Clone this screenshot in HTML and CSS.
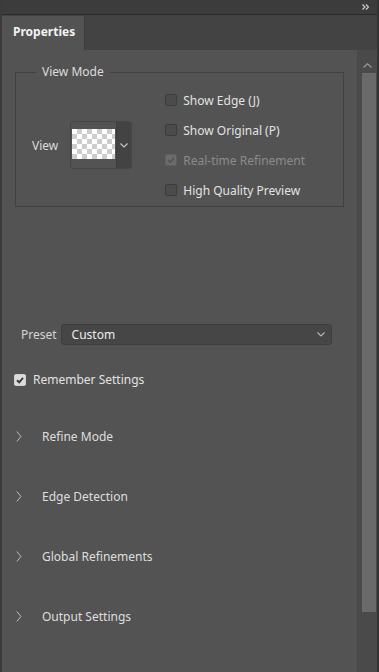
FILE: index.html
```html
<!DOCTYPE html>
<html lang="en">
<head>
    <meta charset="UTF-8">
    <title>Properties</title>
    <link rel="stylesheet" href="styles.css">
</head>
<body>
    <div class="panel">
        <div class="topbar">
            <svg class="collapse" width="7" height="6" viewBox="0 0 7 6">
                <path d="M0.5 0.5 L3 3 L0.5 5.5 M4 0.5 L6.5 3 L4 5.5" fill="none" stroke="#cfcfcf" stroke-width="1.2"/>
            </svg>
        </div>
        <div class="tabs">
            <div class="tab">Properties</div>
        </div>
        <div class="main">
            <div class="content">
                <fieldset class="view-mode">
                    <legend>View Mode</legend>
                    <div class="view-pick">
                        <span class="view-label">View</span>
                        <div class="thumb">
                            <div class="thumb-preview"><div class="checker"></div></div>
                            <div class="thumb-drop">
                                <svg width="8" height="5" viewBox="0 0 8 5"><path d="M0.5 0.5 L4 4 L7.5 0.5" fill="none" stroke="#c8c8c8" stroke-width="1.1"/></svg>
                            </div>
                        </div>
                    </div>
                    <div class="options">
                        <label class="opt"><span class="box"></span>Show Edge (J)</label>
                        <label class="opt"><span class="box"></span>Show Original (P)</label>
                        <label class="opt disabled"><span class="box checked">
                            <svg width="10" height="10" viewBox="0 0 10 10"><path d="M2 5.2 L4.2 7.3 L8 2.8" fill="none" stroke="#545454" stroke-width="1.8"/></svg>
                        </span>Real-time Refinement</label>
                        <label class="opt"><span class="box"></span>High Quality Preview</label>
                    </div>
                </fieldset>

                <div class="preset">
                    <span class="preset-label">Preset</span>
                    <div class="select">
                        <span>Custom</span>
                        <svg width="8" height="5" viewBox="0 0 8 5"><path d="M0.5 0.5 L4 4 L7.5 0.5" fill="none" stroke="#b8b8b8" stroke-width="1.1"/></svg>
                    </div>
                </div>

                <label class="remember"><span class="box on">
                    <svg width="10" height="10" viewBox="0 0 10 10"><path d="M2 5.2 L4.2 7.3 L8 2.8" fill="none" stroke="#3a3a3a" stroke-width="1.9"/></svg>
                </span>Remember Settings</label>

                <div class="sections">
                    <div class="section"><svg class="chev" width="6" height="11" viewBox="0 0 6 11"><path d="M0.8 0.5 L5 5.5 L0.8 10.5" fill="none" stroke="#bdbdbd" stroke-width="1"/></svg>Refine Mode</div>
                    <div class="section"><svg class="chev" width="6" height="11" viewBox="0 0 6 11"><path d="M0.8 0.5 L5 5.5 L0.8 10.5" fill="none" stroke="#bdbdbd" stroke-width="1"/></svg>Edge Detection</div>
                    <div class="section"><svg class="chev" width="6" height="11" viewBox="0 0 6 11"><path d="M0.8 0.5 L5 5.5 L0.8 10.5" fill="none" stroke="#bdbdbd" stroke-width="1"/></svg>Global Refinements</div>
                    <div class="section"><svg class="chev" width="6" height="11" viewBox="0 0 6 11"><path d="M0.8 0.5 L5 5.5 L0.8 10.5" fill="none" stroke="#bdbdbd" stroke-width="1"/></svg>Output Settings</div>
                </div>
            </div>
            <div class="scrollbar">
                <svg class="scroll-up" width="9" height="5" viewBox="0 0 9 5"><path d="M0.5 4.5 L4.5 0.8 L8.5 4.5" fill="none" stroke="#9a9a9a" stroke-width="1.2"/></svg>
                <div class="thumb-bar"></div>
            </div>
        </div>
    </div>
</body>
</html>
```

FILE: styles.css
```css
/* Photoshop style properties panel */
body {
    margin: 0;
    background: #535353;
    font-family: "Noto Sans", "Open Sans", sans-serif;
    font-size: 12px;
    color: #dcdcdc;
    overflow: hidden;
}
.panel {
    width: 379px;
    height: 672px;
    box-sizing: border-box;
    border-left: 2px solid #3b3b3b;
    border-right: 2px solid #333;
    display: flex;
    flex-direction: column;
}
.topbar {
    height: 14px;
    flex: none;
    background: #3c3c3c;
    border-bottom: 1px solid #2c2c2c;
    display: flex;
    justify-content: flex-end;
    align-items: center;
    padding-right: 8px;
}
.tabs {
    height: 35px;
    flex: none;
    background: #434343;
    display: flex;
    align-items: flex-end;
}
.tab {
    width: 83px;
    height: 34px;
    box-sizing: border-box;
    background: #535353;
    border-right: 1px solid #3a3a3a;
    color: #f2f2f2;
    font-weight: bold;
    padding-left: 11px;
    line-height: 31px;
}
.main {
    flex: 1;
    display: flex;
    min-height: 0;
}
.content {
    flex: 1;
    background: #535353;
}
.scrollbar {
    width: 20px;
    background: #4a4a4a;
    display: flex;
    flex-direction: column;
    align-items: center;
}
.scroll-up {
    margin-top: 13px;
}
.thumb-bar {
    width: 14px;
    height: 539px;
    margin-top: 5px;
    margin-left: 3px;
    background: #6a6a6a;
}

/* View mode group */
.view-mode {
    margin: 14px 13px 0;
    padding: 5px 0 1px 16px;
    border: 1px solid #414141;
    display: flex;
    align-items: center;
}
.view-mode legend {
    margin-left: 4px;
    padding: 0 6px;
    line-height: 16px;
    color: #dcdcdc;
}
.view-pick {
    display: flex;
    align-items: center;
    gap: 12px;
}
.thumb {
    width: 62px;
    height: 48px;
    box-sizing: border-box;
    border: 1px solid #464646;
    border-radius: 3px;
    display: flex;
}
.thumb-preview {
    flex: 1;
    padding: 7px 0 0 1px;
}
.checker {
    width: 43px;
    height: 30px;
    background: conic-gradient(#cdcdcd 25%, #fff 0 50%, #cdcdcd 0 75%, #fff 0) 0 0 / 10px 10px;
}
.thumb-drop {
    width: 14px;
    background: #434343;
    border-left: 1px solid #3d3d3d;
    border-radius: 0 2px 2px 0;
    display: flex;
    align-items: center;
    justify-content: center;
}
.options {
    margin-left: 33px;
    display: flex;
    flex-direction: column;
}
.opt {
    height: 30px;
    display: flex;
    align-items: center;
    gap: 6px;
    color: #e2e2e2;
}
.opt.disabled {
    color: #8b8b8b;
}
.box {
    width: 12px;
    height: 12px;
    box-sizing: border-box;
    border: 1px solid #3c3c3c;
    border-radius: 2px;
    background: #4b4b4b;
    display: flex;
    align-items: center;
    justify-content: center;
}
.box.checked {
    background: #6c6c6c;
    border-color: #5f5f5f;
}
.box.on {
    background: #dcdcdc;
    border-color: #cfcfcf;
}

/* Preset */
.preset {
    display: flex;
    align-items: center;
    gap: 4px;
    margin: 117px 0 0 19px;
}
.preset-label {
    color: #d4d4d4;
}
.select {
    width: 271px;
    height: 21px;
    box-sizing: border-box;
    background: #464646;
    border: 1px solid #3e3e3e;
    border-radius: 3px;
    display: flex;
    align-items: center;
    justify-content: space-between;
    padding: 0 6px 0 10px;
    color: #ececec;
}
.remember {
    display: flex;
    align-items: center;
    gap: 7px;
    margin: 26px 0 0 12px;
    color: #e2e2e2;
}

/* Collapsed sections */
.sections {
    margin-top: 18px;
    display: flex;
    flex-direction: column;
}
.section {
    height: 60px;
    display: flex;
    align-items: center;
    color: #dedede;
}
.chev {
    margin: 0 20px 0 14px;
}
```
